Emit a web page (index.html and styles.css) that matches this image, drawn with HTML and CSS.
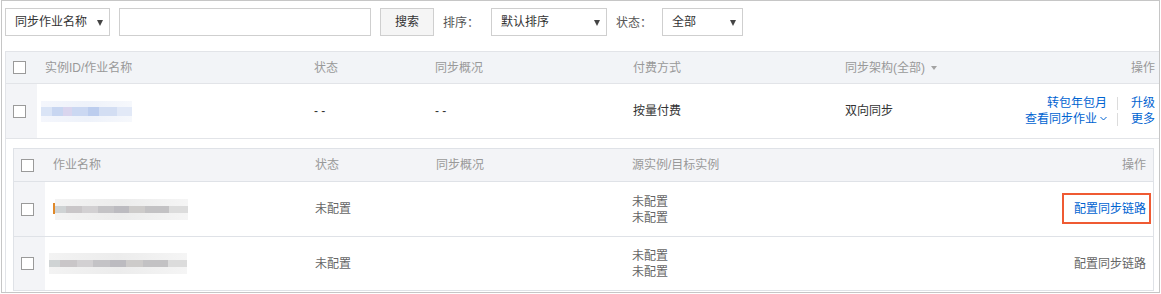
FILE: index.html
```html
<!DOCTYPE html>
<html lang="zh-CN">
<head>
    <meta charset="UTF-8">
    <title>同步作业</title>
    <link rel="stylesheet" href="styles.css">
</head>
<body>

<div class="frame">
    <!--搜索栏-->
    <div class="toolbar">
        <div class="select sel-name">同步作业名称<i class="arrow"></i></div>
        <div class="search-input"></div>
        <div class="btn">搜索</div>
        <span class="label">排序：</span>
        <div class="select sel-sort">默认排序<i class="arrow"></i></div>
        <span class="label label-state">状态：</span>
        <div class="select sel-state">全部<i class="arrow"></i></div>
    </div>

    <!--实例列表-->
    <div class="table">
        <div class="row head">
            <div class="cell chk"><span class="checkbox"></span></div>
            <div class="cell">实例ID/作业名称</div>
            <div class="cell">状态</div>
            <div class="cell">同步概况</div>
            <div class="cell">付费方式</div>
            <div class="cell">同步架构(全部)<i class="caret"></i></div>
            <div class="cell op">操作</div>
        </div>
        <div class="row body">
            <div class="cell chk"><span class="checkbox"></span></div>
            <div class="cell"><span class="blur blur-blue"></span></div>
            <div class="cell">- -</div>
            <div class="cell">- -</div>
            <div class="cell">按量付费</div>
            <div class="cell">双向同步</div>
            <div class="cell op">
                <div class="actions">
                    <div class="line"><a>转包年包月</a><i class="sep"></i><a>升级</a></div>
                    <div class="line"><a>查看同步作业<svg class="chev" width="7" height="5" viewBox="0 0 7 5"><path d="M0.5 1 L3.5 4 L6.5 1" fill="none" stroke="#0063d1" stroke-width="1"/></svg></a><i class="sep"></i><a>更多</a></div>
                </div>
            </div>
        </div>

        <!--展开的子作业-->
        <div class="expand">
            <div class="sub">
                <div class="srow shead">
                    <div class="cell chk"><span class="checkbox"></span></div>
                    <div class="cell">作业名称</div>
                    <div class="cell">状态</div>
                    <div class="cell">同步概况</div>
                    <div class="cell">源实例/目标实例</div>
                    <div class="cell op">操作</div>
                </div>
                <div class="srow sbody">
                    <div class="cell chk"><span class="checkbox"></span></div>
                    <div class="cell"><span class="blur blur-gray first"></span></div>
                    <div class="cell muted">未配置</div>
                    <div class="cell"></div>
                    <div class="cell muted two">未配置<br>未配置</div>
                    <div class="cell op"><a class="link marked">配置同步链路</a></div>
                </div>
                <div class="srow sbody last">
                    <div class="cell chk"><span class="checkbox"></span></div>
                    <div class="cell"><span class="blur blur-gray second"></span></div>
                    <div class="cell muted">未配置</div>
                    <div class="cell"></div>
                    <div class="cell muted two">未配置<br>未配置</div>
                    <div class="cell op muted">配置同步链路</div>
                </div>
            </div>
        </div>
    </div>
</div>

</body>
</html>
```

FILE: styles.css
```css
body{
    margin: 0;
    background: #fff;
    font-family: "Liberation Sans", "Noto Sans CJK SC", sans-serif;
    font-size: 12px;
    color: #333;
}
.frame{
    width: 1159px;
    height: 293px;
    margin-left: 1px;
    box-sizing: border-box;
    border: 1px solid #c6c6c6;
    padding: 7px 0 0 3px;
    overflow: hidden;
}

/* 搜索栏 */
.toolbar{
    display: flex;
    align-items: flex-start;
    height: 28px;
}
.select,
.search-input,
.btn{
    height: 28px;
    box-sizing: border-box;
    border: 1px solid #cfcfcf;
    background: #fff;
    line-height: 26px;
    position: relative;
}
.select{
    padding-left: 9px;
}
.select .arrow{
    position: absolute;
    right: 6px;
    top: 11px;
    width: 0;
    height: 0;
    border-left: 3px solid transparent;
    border-right: 3px solid transparent;
    border-top: 6px solid #444;
}
.sel-name{
    width: 105px;
    margin-right: 9px;
}
.search-input{
    width: 252px;
    margin-right: 9px;
}
.btn{
    width: 54px;
    text-align: center;
    background: #f5f5f5;
    margin-right: 9px;
}
.label{
    font-family: "Noto Sans CJK SC", sans-serif;
    color: #555;
    line-height: 18px;
    margin-top: 5px;
    margin-right: 12px;
}
.label-state{
    margin-right: 10px;
}
.sel-sort{
    width: 116px;
    margin-right: 9px;
}
.sel-state{
    width: 81px;
}

/* 表格 */
.table{
    margin-top: 15px;
    border-top: 1px solid #e2e4e8;
    border-left: 1px solid #e2e4e8;
}
.row{
    display: grid;
    grid-template-columns: 31px 269px 121px 198px 212px 150px 1fr;
    box-sizing: border-box;
    border-bottom: 1px solid #e2e4e8;
}
.row.head{
    height: 32px;
    background: #f2f4f7;
    color: #999;
}
.row.body{
    height: 55px;
}
.cell{
    display: flex;
    align-items: center;
    padding-left: 8px;
    line-height: 16px;
    white-space: nowrap;
}
.cell.chk{
    padding-left: 7px;
}
.row.body .chk,
.srow.sbody .chk{
    background: #f3f4f7;
}
.cell.op{
    justify-content: flex-end;
    padding-left: 0;
    padding-right: 4px;
}
.checkbox{
    width: 13px;
    height: 13px;
    box-sizing: border-box;
    border: 1px solid #9a9a9a;
    background: #fff;
}
.caret{
    display: inline-block;
    margin-left: 6px;
    border-left: 3px solid transparent;
    border-right: 3px solid transparent;
    border-top: 4px solid #a3a3a3;
}

/* 打码的名称 */
.blur{
    display: block;
    filter: blur(0.6px);
}
.blur-blue{
    width: 91px;
    height: 21px;
    margin-left: -4px;
    background:
        linear-gradient(90deg, #dae4f6 0 12%, #c8d6f1 12% 24%, #d9d5ee 24% 34%, #cbd8f2 34% 52%, #bccdee 52% 64%, #d3def3 64% 84%, #e2e9f7 84%) center / 100% 9px no-repeat,
        linear-gradient(90deg, #f4f6fc, #eef2fa 50%, #f6f8fc);
}
.blur-gray{
    height: 21px;
    position: relative;
    background:
        linear-gradient(90deg, #cfd3d4 0 8%, #c9c6c8 8% 20%, #d2d0d2 20% 32%, #c4c3c6 32% 44%, #bcbbc0 44% 56%, #cdcbca 56% 68%, #c3c2c4 68% 86%, #dcdcdc 86%) center / 100% 7px no-repeat,
        linear-gradient(90deg, #f3f3f3, #ececec 50%, #f5f5f5);
}
.blur-gray.first{
    width: 133px;
    margin-left: 2px;
}
.blur-gray.first::before{
    content: "";
    position: absolute;
    left: -2px;
    top: 4px;
    width: 2px;
    height: 11px;
    background: #e0892a;
}
.blur-gray.second{
    width: 138px;
    margin-left: -4px;
}

/* 操作 */
.actions{
    text-align: right;
    color: #0063d1;
}
.actions .line{
    display: flex;
    justify-content: flex-end;
    align-items: center;
    height: 16px;
}
.actions .sep{
    display: block;
    width: 1px;
    height: 13px;
    background: #dcdcdc;
    margin: 0 13px 0 10px;
}
.chev{
    margin-left: 3px;
    vertical-align: 2px;
}
a{
    color: #0063d1;
    text-decoration: none;
}

/* 展开区域 */
.expand{
    padding: 9px 5px 1px 7px;
}
.sub{
    border: 1px solid #dfe2e7;
}
.srow{
    display: grid;
    grid-template-columns: 31px 262px 121px 196px 1fr 1fr;
    box-sizing: border-box;
    border-bottom: 1px solid #dfe2e7;
}
.srow.shead{
    height: 33px;
    background: #f3f4f7;
    color: #999;
}
.srow.sbody{
    height: 55px;
}
.srow.sbody.last{
    height: 53px;
    border-bottom: none;
}
.srow .cell.op{
    padding-right: 7px;
}
.muted{
    color: #666;
}
.two{
    padding-top: 1px;
}
.link.marked{
    position: relative;
}
.link.marked::after{
    content: "";
    position: absolute;
    left: -12px;
    right: -5px;
    top: -8px;
    bottom: -7px;
    border: 2px solid #ef5a33;
}
```
